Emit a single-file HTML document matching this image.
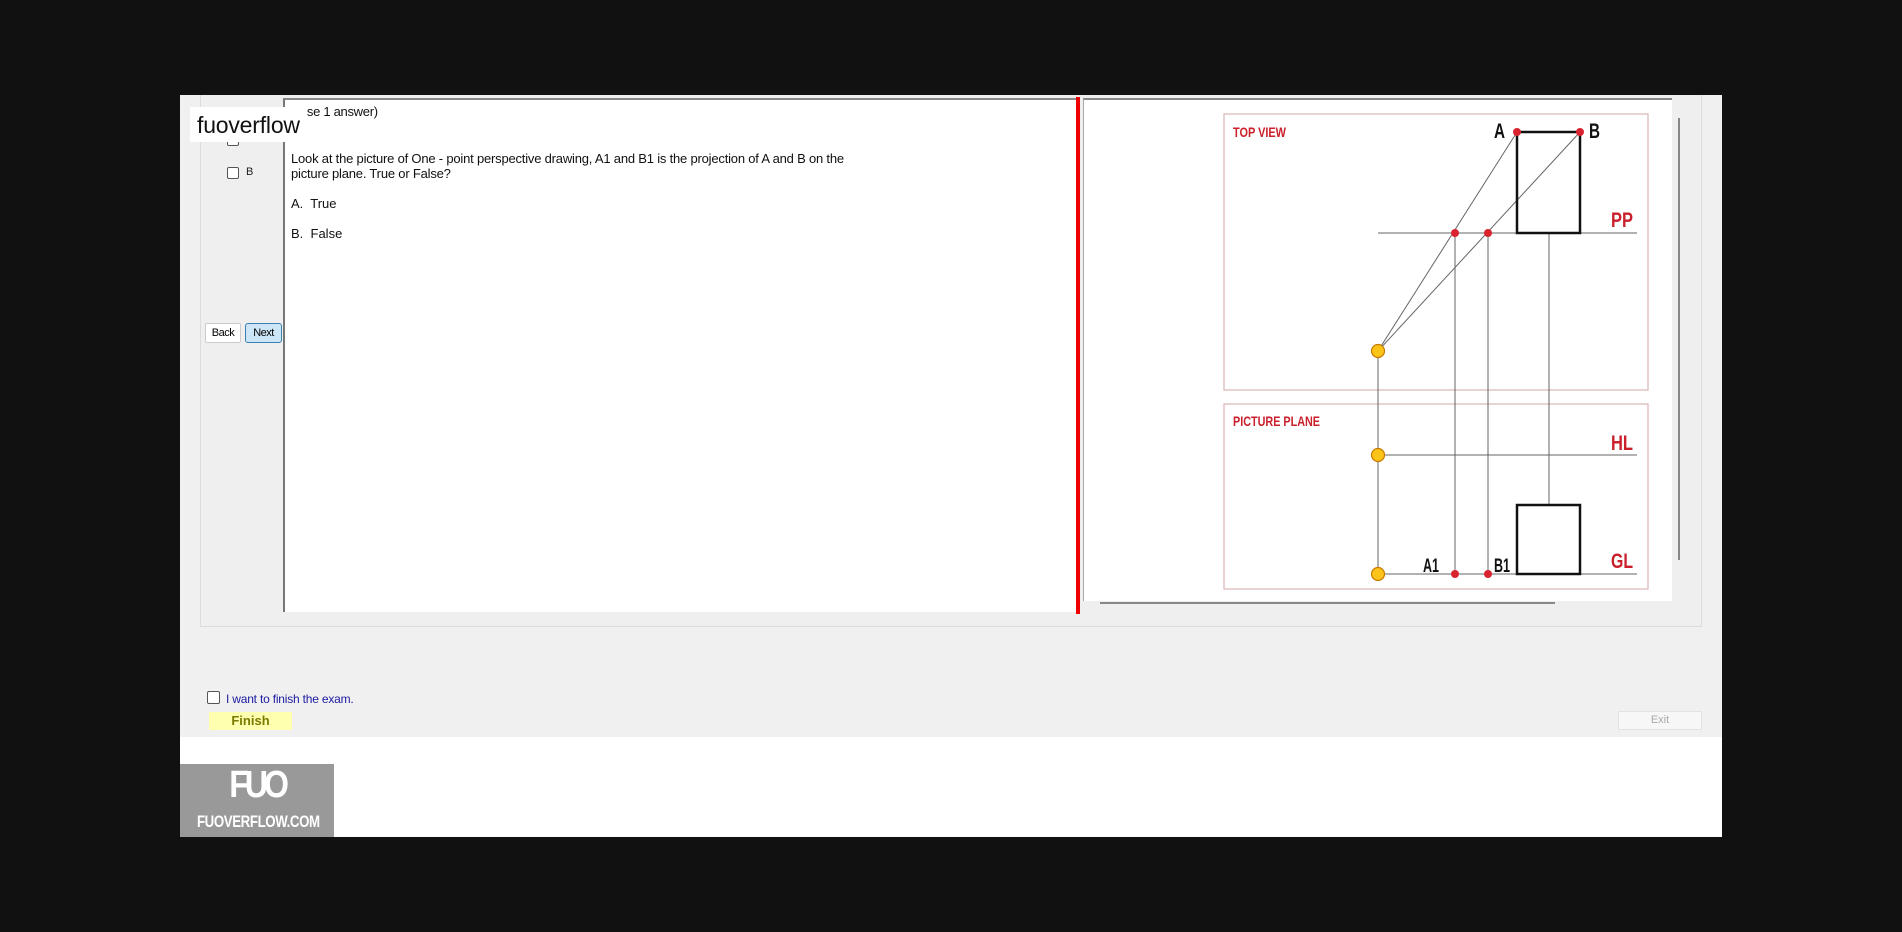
<!DOCTYPE html>
<html><head><meta charset="utf-8"><style>
*{margin:0;padding:0;box-sizing:border-box}
body{width:1902px;height:932px;background:#111;position:relative;overflow:hidden;font-family:"Liberation Sans",Arial,sans-serif}
.a{position:absolute}
</style></head><body>
<div class="a" style="left:180px;top:95px;width:1542px;height:642px;background:#f0f0f0"></div>
<div class="a" style="left:180px;top:737px;width:1542px;height:100px;background:#fff"></div>
<div class="a" style="left:200px;top:95px;width:1502px;height:532px;border:1px solid #dcdcdc;border-top:none;background:#efefef"></div>
<div class="a" style="left:283px;top:98px;width:793px;height:514px;background:#fff;border-left:2px solid #777;border-top:2px solid #888"></div>
<div class="a" style="left:1076px;top:97px;width:4px;height:517px;background:#e00"></div>
<div class="a" style="left:300px;top:104px;font-size:13px;color:#111;letter-spacing:-0.3px">ose 1 answer)</div>
<div class="a" style="left:291px;top:151px;font-size:13px;color:#111;line-height:15px;width:585px;letter-spacing:-0.2px">Look at the picture of One - point perspective drawing, A1 and B1 is the projection of A and B on the picture plane. True or False?</div>
<div class="a" style="left:291px;top:196px;font-size:13px;color:#111">A.&nbsp; True</div>
<div class="a" style="left:291px;top:226px;font-size:13px;color:#111">B.&nbsp; False</div>
<div class="a" style="left:227px;top:134px;width:12px;height:12px;border:1px solid #555;border-radius:2px;background:#fff"></div>
<div class="a" style="left:227px;top:167px;width:12px;height:12px;border:1px solid #555;border-radius:2px;background:#fff"></div>
<div class="a" style="left:246px;top:166px;font-size:11px;color:#222">B</div>
<div class="a" style="left:190px;top:107px;width:117px;height:35px;background:#fff"></div>
<div class="a" style="left:197px;top:112px;font-size:23px;color:#111;letter-spacing:-0.2px">fuoverflow</div>
<div class="a" style="left:205px;top:323px;width:36px;height:20px;border:1px solid #ccc;background:#fff;font-size:11px;text-align:center;line-height:18px;border-radius:2px;letter-spacing:-0.5px">Back</div>
<div class="a" style="left:245px;top:323px;width:37px;height:20px;border:1px solid #3c7fb1;background:#cde6f7;font-size:11px;text-align:center;line-height:18px;border-radius:3px;letter-spacing:-0.5px">Next</div>
<div class="a" style="left:1083px;top:98px;width:589px;height:503px;background:#fff;border-top:2px solid #888;border-left:1px solid #aaa"></div>
<div class="a" style="left:1678px;top:118px;width:2px;height:442px;background:#888"></div>
<div class="a" style="left:1100px;top:602px;width:455px;height:2px;background:#888"></div>
<svg class="a" style="left:0;top:0" width="1902" height="932">
<g fill="none" stroke="#d9b3b3" stroke-width="1.2">
<rect x="1224" y="114" width="424" height="276"/>
<rect x="1224" y="404" width="424" height="185"/>
</g>
<g stroke="#666" stroke-width="1" fill="none">
<line x1="1378" y1="233" x2="1637" y2="233"/>
<line x1="1378" y1="455" x2="1637" y2="455"/>
<line x1="1378" y1="574" x2="1637" y2="574"/>
<line x1="1378" y1="351" x2="1378" y2="574"/>
<line x1="1455" y1="233" x2="1455" y2="574"/>
<line x1="1488" y1="233" x2="1488" y2="574"/>
<line x1="1549" y1="233" x2="1549" y2="505"/>
<line x1="1378" y1="351" x2="1517" y2="132"/>
<line x1="1378" y1="351" x2="1580" y2="132"/>
</g>
<g stroke="#111" stroke-width="2.5" fill="none">
<rect x="1517" y="132" width="63" height="101"/>
<rect x="1517" y="505" width="63" height="69"/>
</g>
<g fill="#d9232e">
<circle cx="1517" cy="132" r="4"/><circle cx="1580" cy="132" r="4"/>
<circle cx="1455" cy="233" r="4"/><circle cx="1488" cy="233" r="4"/>
<circle cx="1455" cy="574" r="4"/><circle cx="1488" cy="574" r="4"/>
</g>
<g fill="#fcc419" stroke="#c77b00" stroke-width="1.2">
<circle cx="1378" cy="351" r="6.5"/><circle cx="1378" cy="455" r="6.5"/><circle cx="1378" cy="574" r="6.5"/>
</g>
<g font-family="Liberation Sans Narrow,Liberation Sans,sans-serif" font-weight="bold">
<text x="1233" y="137" fill="#c9202c" font-size="14" textLength="53" lengthAdjust="spacingAndGlyphs">TOP VIEW</text>
<text x="1233" y="426" fill="#c9202c" font-size="14" textLength="87" lengthAdjust="spacingAndGlyphs">PICTURE PLANE</text>
<text x="1611" y="227" fill="#c9202c" font-size="21" textLength="22" lengthAdjust="spacingAndGlyphs">PP</text>
<text x="1611" y="450" fill="#c9202c" font-size="21" textLength="22" lengthAdjust="spacingAndGlyphs">HL</text>
<text x="1611" y="568" fill="#c9202c" font-size="21" textLength="22" lengthAdjust="spacingAndGlyphs">GL</text>
<text x="1494" y="138" fill="#111" font-size="21" textLength="11" lengthAdjust="spacingAndGlyphs">A</text>
<text x="1589" y="138" fill="#111" font-size="21" textLength="11" lengthAdjust="spacingAndGlyphs">B</text>
<text x="1423" y="572" fill="#111" font-size="19" textLength="16" lengthAdjust="spacingAndGlyphs">A1</text>
<text x="1494" y="572" fill="#111" font-size="19" textLength="16" lengthAdjust="spacingAndGlyphs">B1</text>
</g>
</svg>
<div class="a" style="left:207px;top:691px;width:13px;height:13px;border:1px solid #555;border-radius:2px;background:#fff"></div>
<div class="a" style="left:226px;top:692px;font-size:12px;color:#1a1aa0;letter-spacing:-0.2px">I want to finish the exam.</div>
<div class="a" style="left:209px;top:712px;width:83px;height:18px;background:#ffffb0;font-size:13px;font-weight:bold;color:#7a7a00;text-align:center;line-height:18px">Finish</div>
<div class="a" style="left:1618px;top:711px;width:84px;height:19px;background:#f7f7f7;border:1px solid #e3e3e3;font-size:11px;color:#aaa;text-align:center;line-height:17px">Exit</div>
<div class="a" style="left:180px;top:764px;width:154px;height:73px;background:#999"></div>
<div class="a" style="left:180px;top:764px;width:154px;text-align:center;font-size:38px;font-weight:bold;color:#fff;letter-spacing:-5px;transform:scaleX(0.85)">FUO</div>
<div class="a" style="left:180px;top:812px;width:154px;text-align:center;font-size:17px;font-weight:bold;color:#fff;letter-spacing:-0.5px;transform:scaleX(0.78)">FUOVERFLOW.COM</div>
</body></html>
